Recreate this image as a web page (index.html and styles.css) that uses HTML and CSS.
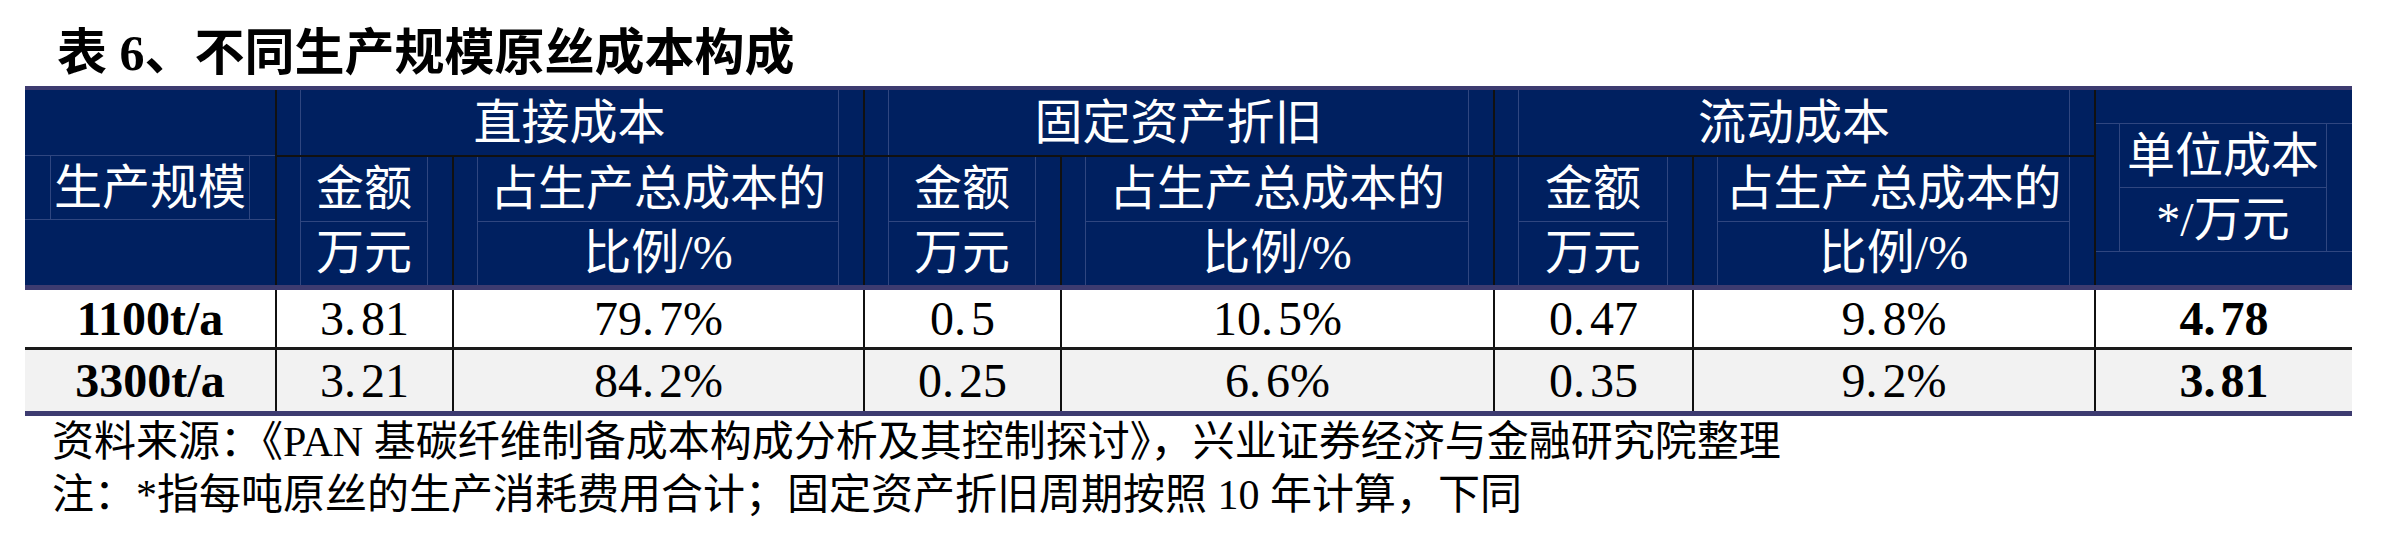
FILE: index.html
```html
<!DOCTYPE html>
<html lang="zh-CN">
<head>
<meta charset="utf-8">
<title>表 6</title>
<link rel="stylesheet" href="styles.css">
</head>
<body>
<div class="page">
  <h1 class="title">表 6、不同生产规模原丝成本构成</h1>
  <div class="tbl">
    <div class="head">
      <div class="hc h-scale">
        <div class="band"></div>
        <div class="band mid"><div class="box">生产规模</div></div>
        <div class="band"></div>
      </div>
      <div class="hc grp g1"><div class="box">直接成本</div></div>
      <div class="hc grp g2"><div class="box">固定资产折旧</div></div>
      <div class="hc grp g3"><div class="box">流动成本</div></div>
      <div class="hc h-unit">
        <div class="band short"></div>
        <div class="band mid2">
          <div class="box2 unit-box"><div class="ln">单位成本</div><div class="ln">*/万元</div></div>
        </div>
        <div class="band short"></div>
      </div>
      <div class="hc sub c2"><div class="box2"><div class="ln">金额</div><div class="ln">万元</div></div></div>
      <div class="hc sub c3"><div class="box2"><div class="ln">占生产总成本的</div><div class="ln">比例/%</div></div></div>
      <div class="hc sub c4"><div class="box2"><div class="ln">金额</div><div class="ln">万元</div></div></div>
      <div class="hc sub c5"><div class="box2"><div class="ln">占生产总成本的</div><div class="ln">比例/%</div></div></div>
      <div class="hc sub c6"><div class="box2"><div class="ln">金额</div><div class="ln">万元</div></div></div>
      <div class="hc sub c7"><div class="box2"><div class="ln">占生产总成本的</div><div class="ln">比例/%</div></div></div>
    </div>
    <div class="body">
      <div class="row r1">
        <div class="dc first bold">1100t/a</div>
        <div class="dc">3<span class="dot">.</span>81</div>
        <div class="dc">79<span class="dot">.</span>7%</div>
        <div class="dc">0<span class="dot">.</span>5</div>
        <div class="dc">10<span class="dot">.</span>5%</div>
        <div class="dc">0<span class="dot">.</span>47</div>
        <div class="dc">9<span class="dot">.</span>8%</div>
        <div class="dc bold">4<span class="dot">.</span>78</div>
      </div>
      <div class="row r2">
        <div class="dc first bold">3300t/a</div>
        <div class="dc">3<span class="dot">.</span>21</div>
        <div class="dc">84<span class="dot">.</span>2%</div>
        <div class="dc">0<span class="dot">.</span>25</div>
        <div class="dc">6<span class="dot">.</span>6%</div>
        <div class="dc">0<span class="dot">.</span>35</div>
        <div class="dc">9<span class="dot">.</span>2%</div>
        <div class="dc bold">3<span class="dot">.</span>81</div>
      </div>
    </div>
  </div>
  <div class="notes">
    <p>资料来源：《PAN 基碳纤维制备成本构成分析及其控制探讨》，兴业证券经济与金融研究院整理</p>
    <p>注：*指每吨原丝的生产消耗费用合计；固定资产折旧周期按照 10 年计算，下同</p>
  </div>
</div>
</body>
</html>
```

FILE: styles.css
```css
* { box-sizing: border-box; }

html, body {
  margin: 0;
  padding: 0;
  background: #ffffff;
}

.page {
  padding-left: 25px;
  width: 2382px;
  font-family: "Liberation Serif", "Noto Sans CJK SC", serif;
}

.title {
  margin: 0;
  padding: 28px 0 0 32px;
  height: 86px;
  font-size: 50px;
  line-height: 50px;
  font-weight: 700;
  color: #000;
  white-space: nowrap;
}

.tbl {
  width: 2327px;
  border-top: 4px solid #3d3b70;
  border-bottom: 5px solid #3d3b70;
}

.head,
.row {
  display: grid;
  grid-template-columns: 250px 177px 411px 197px 433px 199px 402px 258px;
}

.head {
  grid-template-rows: 65px 65px 65px;
  background: #002060;
  color: #ffffff;
  font-size: 48px;
  border-bottom: 5px solid #3d3b70;
}

.hc {
  min-width: 0;
}

.h-scale { grid-column: 1; grid-row: 1 / 4; display: flex; flex-direction: column; }
.g1 { grid-column: 2 / 4; grid-row: 1; }
.g2 { grid-column: 4 / 6; grid-row: 1; }
.g3 { grid-column: 6 / 8; grid-row: 1; }
.h-unit { grid-column: 8; grid-row: 1 / 4; display: flex; flex-direction: column; border-left: 2px solid #111; }
.c2 { grid-column: 2; grid-row: 2 / 4; }
.c3 { grid-column: 3; grid-row: 2 / 4; }
.c4 { grid-column: 4; grid-row: 2 / 4; }
.c5 { grid-column: 5; grid-row: 2 / 4; }
.c6 { grid-column: 6; grid-row: 2 / 4; }
.c7 { grid-column: 7; grid-row: 2 / 4; }

.band { height: 65px; flex: none; }
.band.mid {
  border-top: 1px solid #2f4680;
  border-bottom: 1px solid #2f4680;
  display: flex;
}
.band.short { height: 33px; }
.band.mid2 {
  height: 129px;
  border-top: 1px solid #2f4680;
  border-bottom: 1px solid #2f4680;
  display: flex;
}

.box {
  flex: 1;
  height: 100%;
  border-left: 1px solid #2f4680;
  border-right: 1px solid #2f4680;
  display: flex;
  align-items: center;
  justify-content: center;
  line-height: 1;
  white-space: nowrap;
}

.h-scale .box { margin: 0 25px; }

.grp {
  border-left: 2px solid #111;
  padding: 0 24px 0 23px;
}

.sub {
  border-left: 2px solid #111;
  border-top: 2px solid #111;
  padding: 0 24px 0 23px;
}

.box2 {
  height: 100%;
  border-left: 1px solid #2f4680;
  border-right: 1px solid #2f4680;
  display: flex;
  flex-direction: column;
}

.unit-box {
  flex: 1;
  margin: 0 25px 0 23px;
}

.ln {
  flex: 1;
  display: flex;
  align-items: center;
  justify-content: center;
  line-height: 1;
  white-space: nowrap;
}

.ln + .ln {
  border-top: 1px solid #2f4680;
}

.row {
  font-size: 48px;
  color: #000;
}

.r1 {
  height: 60px;
  background: #ffffff;
  border-bottom: 3px solid #1a1a1a;
}

.r2 {
  height: 61px;
  background: #f2f2f2;
}

.dc {
  display: flex;
  align-items: center;
  justify-content: center;
  border-left: 2px solid #111;
  line-height: 1;
  white-space: nowrap;
}

.dc.first { border-left: none; }
.dc.bold { font-weight: 700; }

.dot { margin-right: 5px; }

.notes {
  font-size: 42px;
  line-height: 53px;
  color: #000;
  padding-left: 27px;
}

.notes p {
  margin: 0;
  white-space: nowrap;
}
```
